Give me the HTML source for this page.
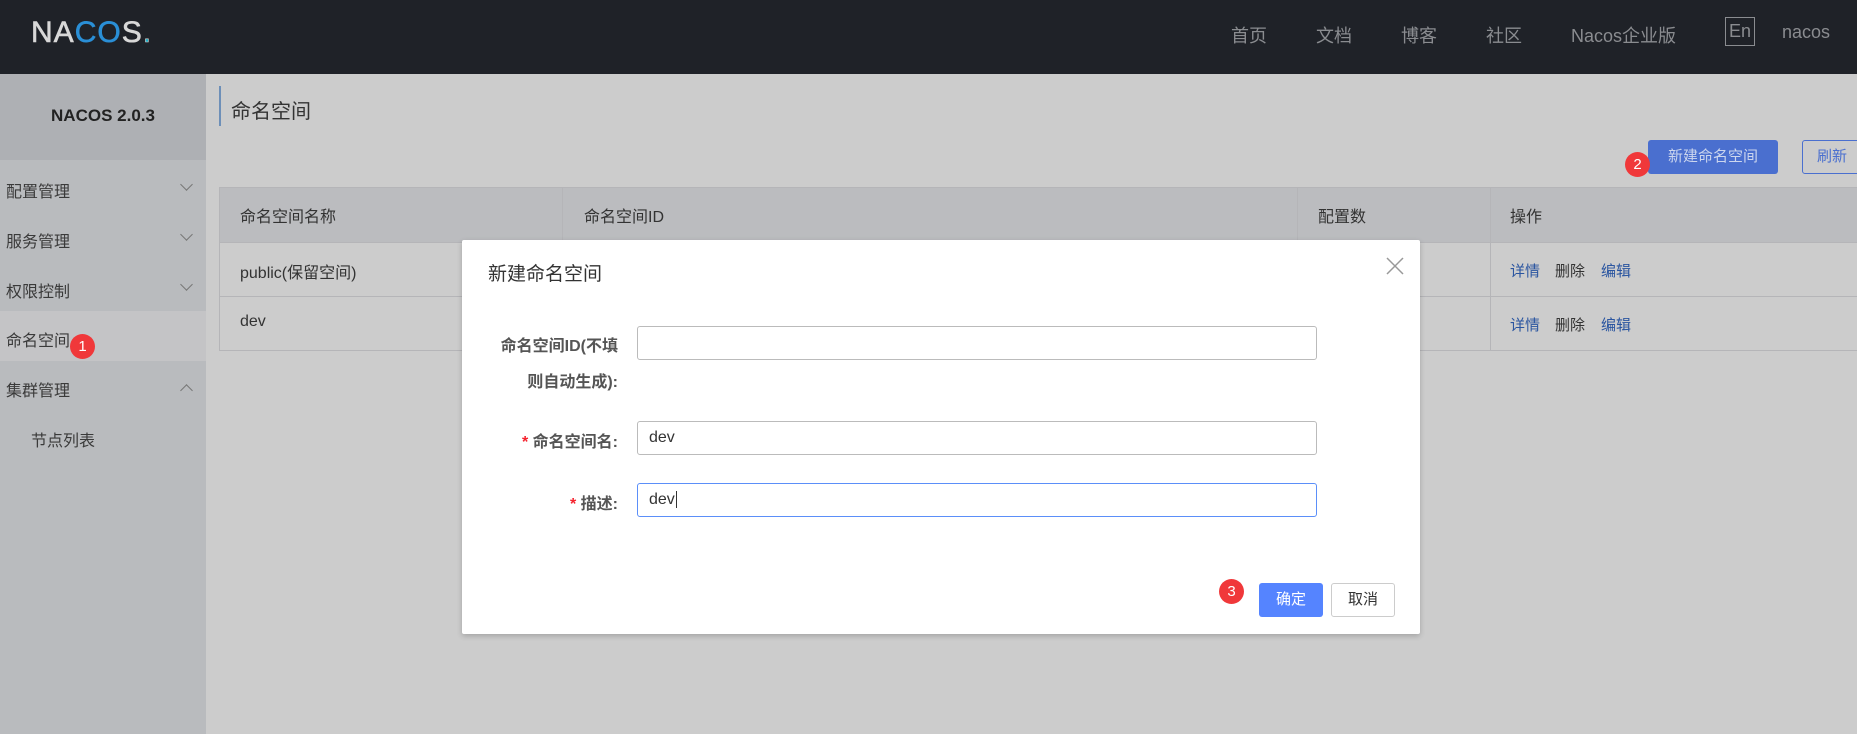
<!DOCTYPE html>
<html><head><meta charset="utf-8"><style>
*{margin:0;padding:0;box-sizing:border-box}
body{width:1857px;height:734px;overflow:hidden;position:relative;background:#cccccc;font-family:"Liberation Sans","Noto Sans CJK SC",sans-serif;color:#333}
.a{position:absolute;white-space:nowrap}
.hdr{left:0;top:0;width:1857px;height:74px;background:#1f2228}
.nav{color:#8a8c90;font-size:18px;top:22px}
.side{left:0;top:74px;width:206px;height:660px;background:#b9bbbe}
.mi{left:6px;font-size:16px;color:#3a3a3a}
.chev{left:182px;width:9px;height:9px;border-right:1.3px solid #777;border-bottom:1.3px solid #777;transform:rotate(45deg)}
.badge{width:25px;height:25px;border-radius:50%;background:#f0383a;color:#fff;font-size:15px;text-align:center;line-height:25px}
.th{font-size:16px;color:#333;top:203px}
.td{font-size:16px;color:#333}
.lk{font-size:15px;color:#2a55a0}
.lbl{font-size:16px;color:#555;font-weight:bold;text-align:right}
.inp{left:637px;width:680px;height:34px;border:1px solid #bbb;border-radius:3px;background:#fff;font-size:16px;padding-left:11px;line-height:32px;color:#333}
.star{color:#f5222d}
</style></head><body>
<div class="a hdr"></div>
<div class="a" style="left:31px;top:16px;font-size:30px;color:#d8d8d8;letter-spacing:1px;-webkit-text-stroke:0.6px #d8d8d8">NA<span style="color:#2a8fd6;-webkit-text-stroke:0.6px #2a8fd6">CO</span>S<span style="color:#1ab0c8">.</span></div>
<div class="a nav" style="left:1231px">首页</div>
<div class="a nav" style="left:1316px">文档</div>
<div class="a nav" style="left:1401px">博客</div>
<div class="a nav" style="left:1486px">社区</div>
<div class="a nav" style="left:1571px">Nacos企业版</div>
<div class="a" style="left:1725px;top:17px;width:30px;height:29px;border:1px solid #8a8c90;color:#8a8c90;font-size:18px;text-align:center;line-height:27px">En</div>
<div class="a nav" style="left:1782px">nacos</div>

<div class="a side"></div>
<div class="a" style="left:0;top:74px;width:206px;height:86px;background:#aeb0b4"></div>
<div class="a" style="left:0;top:106px;width:206px;text-align:center;font-weight:bold;font-size:17px;color:#222">NACOS 2.0.3</div>
<div class="a mi" style="top:178px">配置管理</div><div class="a chev" style="top:180px"></div>
<div class="a mi" style="top:228px">服务管理</div><div class="a chev" style="top:230px"></div>
<div class="a mi" style="top:278px">权限控制</div><div class="a chev" style="top:280px"></div>
<div class="a" style="left:0;top:311px;width:206px;height:50px;background:#c4c4c6"></div>
<div class="a mi" style="top:327px">命名空间</div>
<div class="a badge" style="left:70px;top:334px">1</div>
<div class="a mi" style="top:377px">集群管理</div><div class="a chev" style="top:386px;transform:rotate(225deg)"></div>
<div class="a mi" style="left:31px;top:427px">节点列表</div>

<div class="a" style="left:219px;top:86px;width:2px;height:40px;background:#6d8fb8"></div>
<div class="a" style="left:231px;top:95px;font-size:20px;color:#333">命名空间</div>
<div class="a" style="left:1648px;top:140px;width:130px;height:34px;background:#4a6fcf;border-radius:3px;color:#ccd6ee;font-size:15px;text-align:center;line-height:34px">新建命名空间</div>
<div class="a badge" style="left:1625px;top:152px">2</div>
<div class="a" style="left:1802px;top:140px;width:70px;height:34px;border:1px solid #4a6fcf;border-radius:3px;color:#4a6fcf;font-size:15px;padding-left:14px;line-height:32px">刷新</div>

<div class="a" style="left:219px;top:187px;width:1650px;height:164px;border:1px solid #b5b5b8"></div>
<div class="a" style="left:220px;top:188px;width:1650px;height:54px;background:#bbbcbf"></div>
<div class="a" style="left:220px;top:242px;width:1650px;height:1px;background:#b5b5b8"></div>
<div class="a" style="left:220px;top:296px;width:1650px;height:1px;background:#b5b5b8"></div>
<div class="a" style="left:562px;top:188px;width:1px;height:163px;background:#b5b5b8"></div>
<div class="a" style="left:1297px;top:188px;width:1px;height:163px;background:#b5b5b8"></div>
<div class="a" style="left:1490px;top:188px;width:1px;height:163px;background:#b5b5b8"></div>
<div class="a th" style="left:240px">命名空间名称</div>
<div class="a th" style="left:584px">命名空间ID</div>
<div class="a th" style="left:1318px">配置数</div>
<div class="a th" style="left:1510px">操作</div>
<div class="a td" style="left:240px;top:259px">public(保留空间)</div>
<div class="a td" style="left:240px;top:313px">dev</div>
<div class="a lk" style="left:1510px;top:260px">详情</div><div class="a lk" style="left:1555px;top:260px;color:#333">删除</div><div class="a lk" style="left:1601px;top:260px">编辑</div>
<div class="a lk" style="left:1510px;top:314px">详情</div><div class="a lk" style="left:1555px;top:314px;color:#333">删除</div><div class="a lk" style="left:1601px;top:314px">编辑</div>

<div class="a" style="left:462px;top:240px;width:958px;height:394px;background:#fff;border-radius:2px;box-shadow:0 2px 6px rgba(0,0,0,.2)"></div>
<div class="a" style="left:488px;top:259px;font-size:19px;color:#333">新建命名空间</div>
<svg class="a" style="left:1385px;top:256px" width="20" height="20"><path d="M2 2L18 18M18 2L2 18" stroke="#999" stroke-width="1.5"/></svg>
<div class="a lbl" style="left:480px;width:138px;top:332px">命名空间ID(不填</div>
<div class="a lbl" style="left:480px;width:138px;top:368px">则自动生成):</div>
<div class="a inp" style="top:326px"></div>
<div class="a lbl" style="left:480px;width:138px;top:428px"><span class="star">* </span>命名空间名:</div>
<div class="a inp" style="top:421px">dev</div>
<div class="a lbl" style="left:480px;width:138px;top:490px"><span class="star">* </span>描述:</div>
<div class="a inp" style="top:483px;border-color:#5b8ff9">dev<span style="border-left:1px solid #333;margin-left:1px"></span></div>
<div class="a badge" style="left:1219px;top:579px">3</div>
<div class="a" style="left:1259px;top:583px;width:64px;height:34px;background:#5584ff;border-radius:3px;color:#fff;font-size:15px;text-align:center;line-height:34px">确定</div>
<div class="a" style="left:1331px;top:583px;width:64px;height:34px;border:1px solid #ccc;border-radius:3px;color:#333;font-size:15px;text-align:center;line-height:32px">取消</div>
</body></html>
